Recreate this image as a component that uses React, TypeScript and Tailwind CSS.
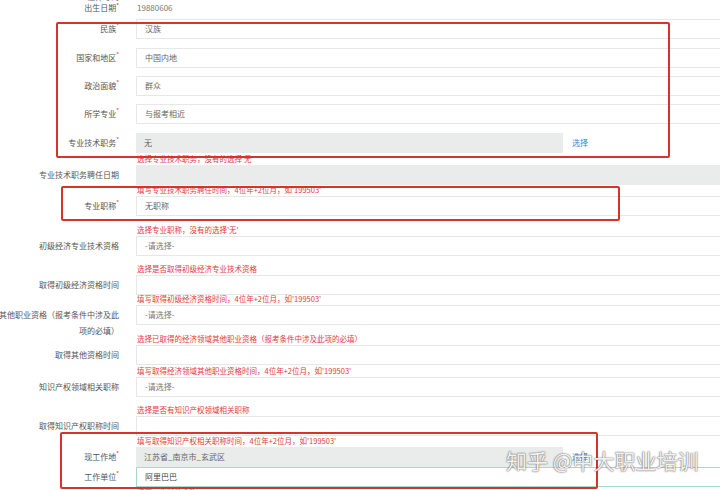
type Kind = 'input' | 'gray' | 'pick' | 'active'

type Field = {
  label: string
  required?: boolean
  value?: string
  placeholder?: boolean
  kind?: Kind
  hint?: string
  gap: string
}

const fields: Field[] = [
  { label: '民族', required: true, value: '汉族', gap: 'h-[9px]' },
  { label: '国家和地区', required: true, value: '中国内地', gap: 'h-[8px]' },
  { label: '政治面貌', required: true, value: '群众', gap: 'h-[8px]' },
  { label: '所学专业', required: true, value: '与报考相近', gap: 'h-[9px]' },
  {
    label: '专业技术职务',
    required: true,
    value: '无',
    kind: 'pick',
    hint: "选择专业技术职务，没有的选择'无'",
    gap: 'h-[12px]',
  },
  {
    label: '专业技术职务聘任日期',
    kind: 'gray',
    hint: "填写专业技术职务聘任时间，4位年+2位月，如'199503'",
    gap: 'h-[11px]',
  },
  {
    label: '专业职称',
    required: true,
    value: '无职称',
    hint: "选择专业职称，没有的选择'无'",
    gap: 'h-[20px]',
  },
  {
    label: '初级经济专业技术资格',
    value: '-请选择-',
    placeholder: true,
    hint: '选择是否取得初级经济专业技术资格',
    gap: 'h-[19px]',
  },
  {
    label: '取得初级经济资格时间',
    hint: "填写取得初级经济资格时间，4位年+2位月，如'199503'",
    gap: 'h-[10px]',
  },
  {
    label: '其他职业资格（报考条件中涉及此项的必填）',
    value: '-请选择-',
    placeholder: true,
    hint: '选择已取得的经济领域其他职业资格（报考条件中涉及此项的必填）',
    gap: 'h-[20px]',
  },
  {
    label: '取得其他资格时间',
    hint: "填写取得经济领域其他职业资格时间，4位年+2位月，如'199503'",
    gap: 'h-[12px]',
  },
  {
    label: '知识产权领域相关职称',
    value: '-请选择-',
    placeholder: true,
    hint: '选择是否有知识产权领域相关职称',
    gap: 'h-[19px]',
  },
  {
    label: '取得知识产权职称时间',
    hint: "填写取得知识产权相关职称时间，4位年+2位月，如'199503'",
    gap: 'h-[11px]',
  },
  { label: '现工作地', required: true, value: '江苏省_南京市_玄武区', kind: 'pick', gap: 'h-0' },
  {
    label: '工作单位',
    required: true,
    value: '阿里巴巴',
    kind: 'active',
    hint: '填写工作单位全称',
    gap: 'h-[12px]',
  },
]

function Label({ text, required }: { text: string; required?: boolean }) {
  return (
    <div className="-ml-[5px] w-[124px] shrink-0 self-start pt-[2px] text-right text-[8px] leading-[16px] text-[#555]">
      {text}
      {required && <span className="align-top text-[6px] leading-[10px] text-[#e23b3b]">*</span>}
    </div>
  )
}

function FieldRow({ f }: { f: Field }) {
  const textColor = f.placeholder ? 'text-[#777]' : f.kind === 'active' ? 'text-[#444]' : 'text-[#666]'

  return (
    <>
      <div className="flex h-[20px] items-center">
        <Label text={f.label} required={f.required} />

        {f.kind === 'pick' ? (
          <div className="ml-[17px] flex h-full items-center">
            <div className={`flex h-full w-[427px] items-center bg-[#eaebeb] pl-[8px] text-[8px] ${textColor}`}>
              {f.value}
            </div>
            <span className="ml-[9px] text-[8px] text-[#3d7fd1]">选择</span>
          </div>
        ) : f.kind === 'gray' ? (
          <div className="ml-[17px] h-full flex-1 bg-[#eaebeb]" />
        ) : (
          <div
            className={`ml-[17px] flex h-full flex-1 items-center border pl-[8px] text-[8px] ${textColor} ${
              f.kind === 'active' ? 'border-[#a3dccd]' : 'border-[#e6e7e7]'
            }`}
          >
            {f.value}
          </div>
        )}
      </div>

      {/* 提示文字 */}
      <div className={`flex items-end pl-[137px] ${f.gap}`}>
        {f.hint && (
          <span className="whitespace-nowrap pb-[1px] text-[7.5px] leading-[10px] text-[#e5393c]">{f.hint}</span>
        )}
      </div>
    </>
  )
}

export default function App() {
  return (
    <div className="relative h-[490px] w-[720px] overflow-hidden bg-white font-['Noto_Sans_CJK_SC','Noto_Sans',sans-serif]">
      <div className="flex w-[780px] flex-col">
        {/* 上一行（被截掉） */}
        <div className="-mt-[8px] flex h-[10px] items-end">
          <div className="-ml-[5px] w-[124px] text-right text-[8px] leading-[10px] text-[#555]">证件号码</div>
        </div>

        <div className="flex h-[12px] items-center">
          <div className="-ml-[5px] w-[124px] shrink-0 text-right text-[8px] leading-[12px] text-[#555]">
            出生日期<span className="align-top text-[6px] leading-[8px] text-[#e23b3b]">*</span>
          </div>
          <span className="ml-[18px] text-[8px] text-[#777]">19880606</span>
        </div>

        <div className="h-[5px]" />

        {fields.map((f) => (
          <FieldRow key={f.label} f={f} />
        ))}
      </div>

      {/* 红框标注 */}
      <div className="absolute left-[56px] top-[22px] h-[136px] w-[614px] rounded-[2px] border-2 border-[#d6342b]" />
      <div className="absolute left-[61px] top-[186px] h-[35px] w-[559px] rounded-[2px] border-2 border-[#d6342b]" />
      <div className="absolute left-[60px] top-[432px] h-[57px] w-[538px] rounded-[2px] border-2 border-[#d6342b]" />

      {/* 水印 */}
      <div className="absolute left-[506px] top-[449px] whitespace-nowrap text-[21px] leading-[22px] text-[#f2f2f2] [text-shadow:0_0_1px_#555,0_0_2px_rgba(0,0,0,0.45)]">
        知乎 @中大职业培训
      </div>
    </div>
  )
}
